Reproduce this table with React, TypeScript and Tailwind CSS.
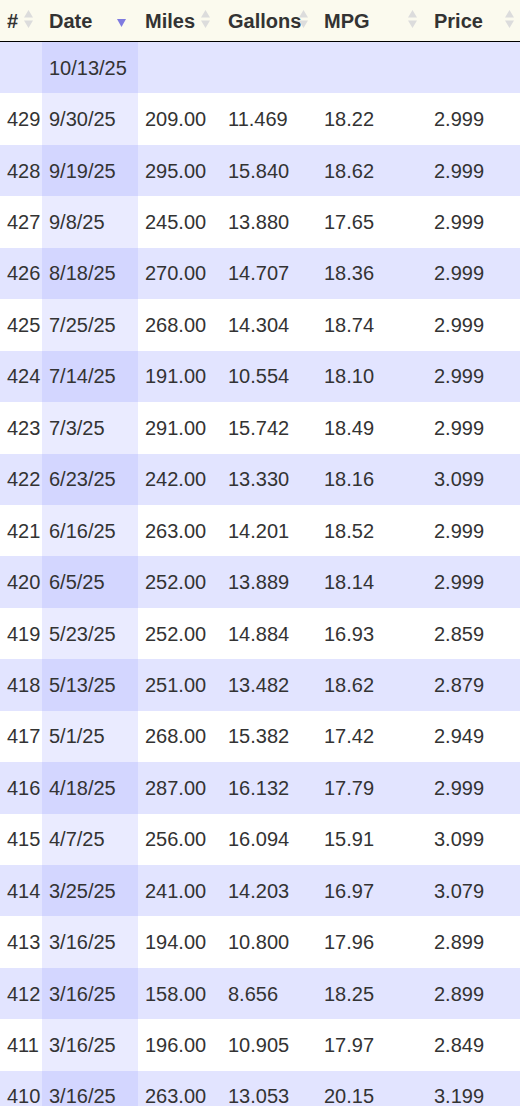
import React from "react";

const rows: string[][] = [
  ["", "10/13/25", "", "", "", ""],
  ["429", "9/30/25", "209.00", "11.469", "18.22", "2.999"],
  ["428", "9/19/25", "295.00", "15.840", "18.62", "2.999"],
  ["427", "9/8/25", "245.00", "13.880", "17.65", "2.999"],
  ["426", "8/18/25", "270.00", "14.707", "18.36", "2.999"],
  ["425", "7/25/25", "268.00", "14.304", "18.74", "2.999"],
  ["424", "7/14/25", "191.00", "10.554", "18.10", "2.999"],
  ["423", "7/3/25", "291.00", "15.742", "18.49", "2.999"],
  ["422", "6/23/25", "242.00", "13.330", "18.16", "3.099"],
  ["421", "6/16/25", "263.00", "14.201", "18.52", "2.999"],
  ["420", "6/5/25", "252.00", "13.889", "18.14", "2.999"],
  ["419", "5/23/25", "252.00", "14.884", "16.93", "2.859"],
  ["418", "5/13/25", "251.00", "13.482", "18.62", "2.879"],
  ["417", "5/1/25", "268.00", "15.382", "17.42", "2.949"],
  ["416", "4/18/25", "287.00", "16.132", "17.79", "2.999"],
  ["415", "4/7/25", "256.00", "16.094", "15.91", "3.099"],
  ["414", "3/25/25", "241.00", "14.203", "16.97", "3.079"],
  ["413", "3/16/25", "194.00", "10.800", "17.96", "2.899"],
  ["412", "3/16/25", "158.00", "8.656", "18.25", "2.899"],
  ["411", "3/16/25", "196.00", "10.905", "17.97", "2.849"],
  ["410", "3/16/25", "263.00", "13.053", "20.15", "3.199"],
];

function BothIcon({ left }: { left: string }) {
  return (
    <svg
      className={`absolute top-[10px] ${left}`}
      width="9"
      height="18"
      viewBox="0 0 9 18"
    >
      <polygon points="4.5,0 9,7.5 0,7.5" fill="#dcdcdc" />
      <polygon points="0,10.5 9,10.5 4.5,18" fill="#dcdcdc" />
    </svg>
  );
}

function DescIcon() {
  return (
    <svg
      className="absolute top-[19px] left-[75px]"
      width="9"
      height="8"
      viewBox="0 0 9 8"
    >
      <polygon points="0,0 9,0 4.5,8" fill="#7f7be0" />
    </svg>
  );
}

export default function App() {
  return (
    <div
      className="w-[520px] bg-white text-[#333333] text-[20px]"
      style={{ fontFamily: '"Liberation Sans", Arial, sans-serif' }}
    >
      <div className="h-[1106px] overflow-hidden">
        <div className="grid grid-cols-[42px_96px_83px_96px_110px_93px] h-[42px] items-center bg-[#fbfaee] border-b border-black font-bold">
          <div className="relative h-full flex items-center pl-[7px]">
            #<BothIcon left="left-[24px]" />
          </div>
          <div className="relative h-full flex items-center pl-[7px]">
            Date
            <DescIcon />
          </div>
          <div className="relative h-full flex items-center pl-[7px]">
            Miles<BothIcon left="left-[63px]" />
          </div>
          <div className="relative h-full flex items-center pl-[7px]">
            Gallons<BothIcon left="left-[78px]" />
          </div>
          <div className="relative h-full flex items-center pl-[7px]">
            MPG<BothIcon left="left-[91px]" />
          </div>
          <div className="relative h-full flex items-center pl-[7px]">
            Price<BothIcon left="left-[78px]" />
          </div>
        </div>
        {rows.map((r, i) => {
          const odd = i % 2 === 0;
          return (
            <div
              key={i}
              className={`grid grid-cols-[42px_96px_83px_96px_110px_93px] h-[51.45px] ${
                odd ? "bg-[#e2e4ff]" : "bg-white"
              }`}
            >
              {r.map((c, j) => (
                <div
                  key={j}
                  className={`flex items-center pl-[7px] whitespace-nowrap ${
                    j === 1 ? (odd ? "bg-[#d3d6ff]" : "bg-[#eaebff]") : ""
                  }`}
                >
                  {c}
                </div>
              ))}
            </div>
          );
        })}
      </div>
    </div>
  );
}
